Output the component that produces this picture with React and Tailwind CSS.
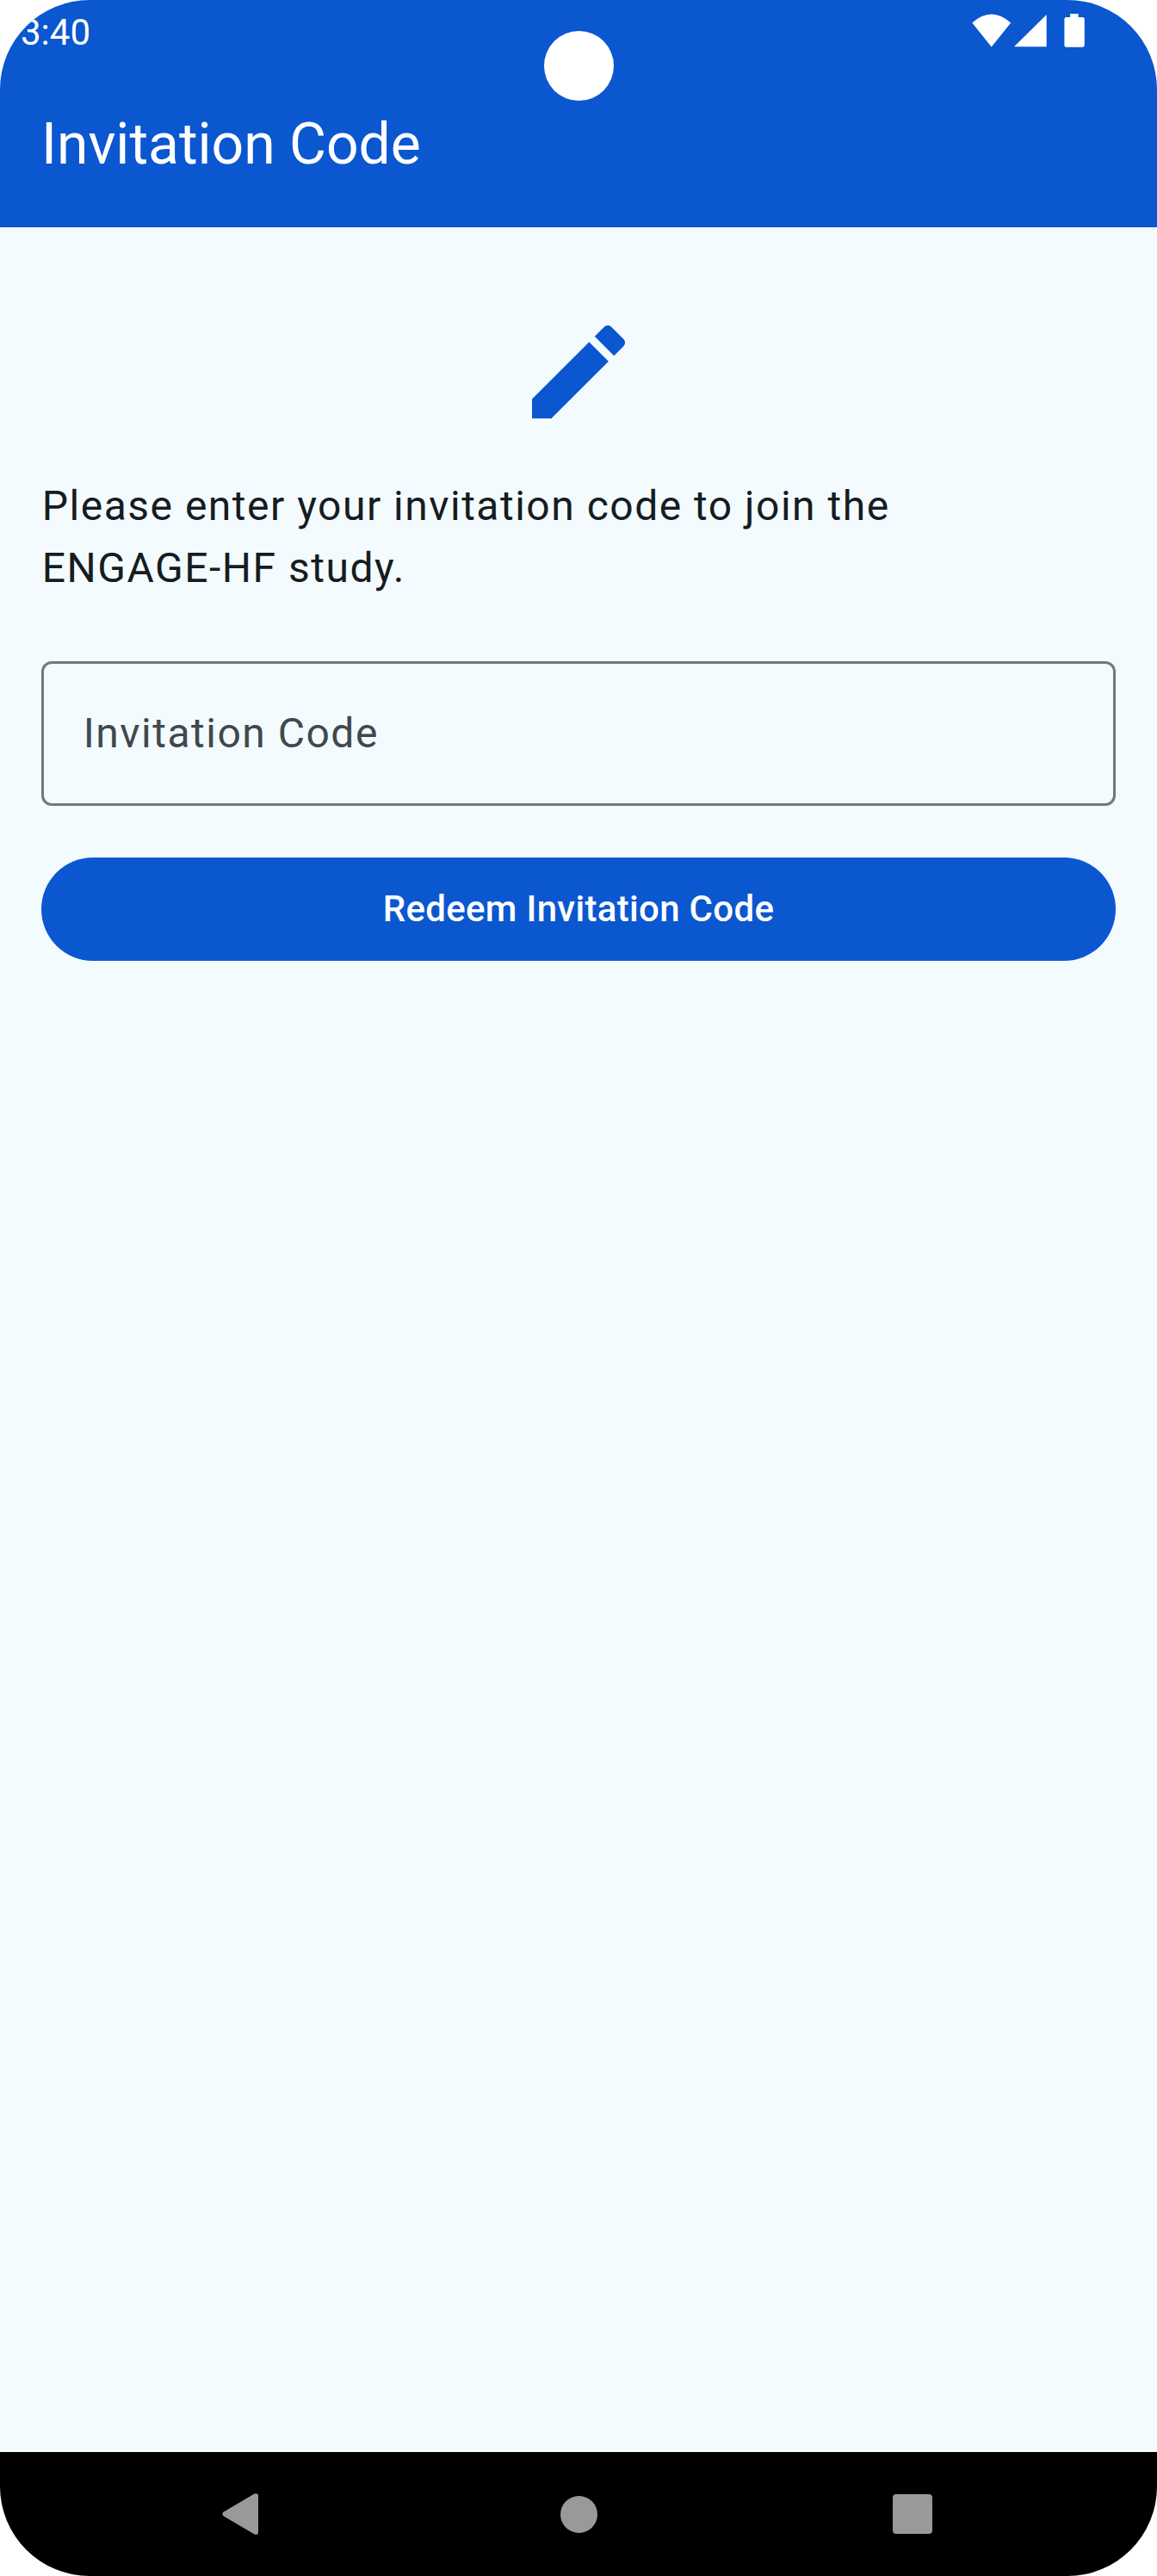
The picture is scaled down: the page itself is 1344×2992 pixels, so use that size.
function StatusBar() {
  return (
    <div className="flex h-[72px] items-start justify-between pl-6 pr-[84px]">
      <span className="pt-[2px] text-[42px] leading-[72px]">3:40</span>
      <svg className="h-[72px] w-[132px]" viewBox="0 0 132 72" fill="currentColor" aria-hidden="true">
        <path d="M1.300 26.600Q23.700 6.600 46.200 26.600L23.700 54.400Z" />
        <path d="M50 54.200L87.700 17V54.200Z" />
        <path d="M116 16h9.500v4h5a2.200 2.200 0 0 1 2.200 2.200v30.300a2.200 2.200 0 0 1-2.200 2.200h-19a2.200 2.200 0 0 1-2.200-2.200V22.200a2.200 2.200 0 0 1 2.200-2.200h4.500z" transform="translate(-0.900 0)" />
      </svg>
    </div>
  );
}

function NavigationBar() {
  return (
    <nav className="flex h-36 items-center bg-black pl-[258px] text-[#999999]">
      <svg className="h-12 w-[42px]" viewBox="0 0 42 48" fill="currentColor" aria-hidden="true">
        <path d="M1.800 21.600L37.500 0.600Q42 -1 42 3V45Q42 49 37.500 47.400L1.800 26.400Q-1.200 24 1.800 21.600Z" />
      </svg>
      <div className="ml-[350.5px] size-[43px] rounded-full bg-[#999999]" />
      <div className="ml-[343.5px] size-[46px] rounded-[4px] bg-[#999999]" />
    </nav>
  );
}

export default function App() {
  return (
    <div className="h-[2992px] w-[1344px] bg-white font-['Roboto',sans-serif]">
      <div className="relative flex h-full w-full flex-col overflow-hidden rounded-[104px] bg-[#f3fbff]">
        <header className="h-[264px] bg-[#0b57d0] text-white">
          <StatusBar />
          <h1 className="pl-12 pt-[49px] text-[66px] leading-[94px]">Invitation Code</h1>
        </header>
        <div className="absolute left-[631.5px] top-[35.5px] size-[81px] rounded-full bg-white" />
        <main className="flex flex-1 flex-col px-12 pt-24">
          <svg className="size-36 self-center text-[#0b57d0]" viewBox="0 0 24 24" fill="currentColor" aria-hidden="true">
            <path d="M3 17.250V21h3.750L17.810 9.940l-3.750-3.750L3 17.250zM20.710 7.040c.39-.39.39-1.020 0-1.410l-2.340-2.340c-.39-.39-1.020-.39-1.410 0l-1.830 1.830 3.750 3.750 1.830-1.830z" />
          </svg>
          <p className="mt-12 pl-[0.75px] text-[48px] leading-[72px] tracking-[1.5px] text-[#161c20]">
            Please enter your invitation code to join the
            <br />
            ENGAGE-HF study.
          </p>
          <input
            className="mt-[72px] h-[168px] rounded-xl border-[3px] border-[#71787e] bg-transparent pb-[2px] pl-[45.75px] pr-[45px] text-[48px] leading-[72px] tracking-[1.5px] outline-none placeholder:text-[#41484d]"
            placeholder="Invitation Code"
          />
          <button className="mt-[60px] h-[120px] rounded-full bg-[#0b57d0] text-[42px] font-medium leading-[60px] tracking-[0.3px] text-white">
            Redeem Invitation Code
          </button>
        </main>
        <NavigationBar />
      </div>
    </div>
  );
}
